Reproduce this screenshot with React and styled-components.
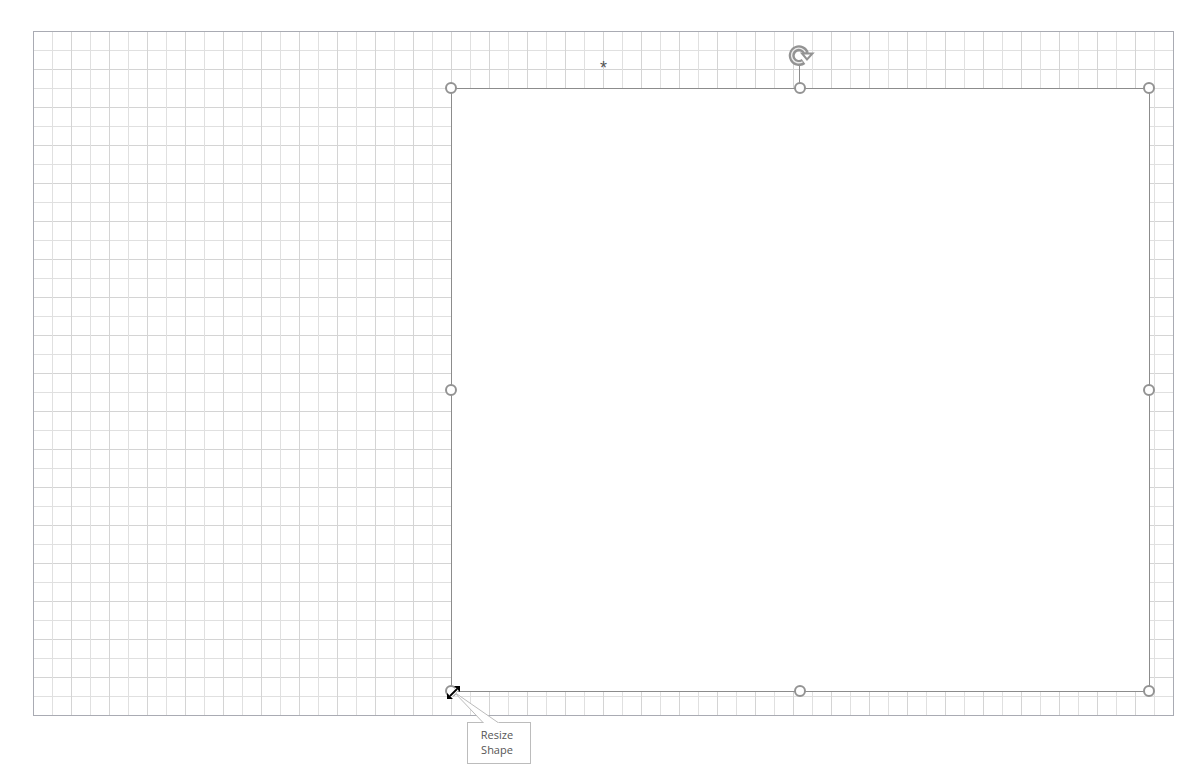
import React from "react";
import styled, { createGlobalStyle } from "styled-components";

const Global = createGlobalStyle`
  * { box-sizing: border-box; }
  body {
    margin: 0;
    background: #fff;
    color: #555;
    font-family: "Open Sans", "Noto Sans", sans-serif;
  }
`;

const Page = styled.main`
  display: flex;
  flex-direction: column;
  min-height: 100vh;
  padding: 31px 24px 51px 33px;
`;

const Canvas = styled.section`
  display: flex;
  flex: 1;
  position: relative;
  padding: 56px 23px 23px 417px;
  border: 1px solid #a9abb3;
  background-color: #fff;
  background-image:
    linear-gradient(to right, transparent 18px, #e0e0e0 18px, #e0e0e0 19px, transparent 19px, transparent 37px, #d4d4d4 37px),
    linear-gradient(to bottom, transparent 18px, #e0e0e0 18px, #e0e0e0 19px, transparent 19px, transparent 37px, #d4d4d4 37px);
  background-size: 38px 38px;
`;

const Note = styled.span`
  position: absolute;
  left: 566px;
  top: 26px;
  font-family: "Liberation Sans", Arial, sans-serif;
  font-size: 18px;
  line-height: 20px;
`;

const Shape = styled.div`
  flex: 1;
  position: relative;
  border: 1px solid #8c8c8c;
  background: #fff;
`;

const Frame = styled.div`
  position: absolute;
  inset: -1px 0 0 -1px;
`;

const Handle = styled.button`
  position: absolute;
  left: ${(p) => p.$x};
  top: ${(p) => p.$y};
  width: 12px;
  height: 12px;
  margin: -6px;
  padding: 0;
  border: 2px solid #939393;
  border-radius: 50%;
  background: #fff;
  cursor: ${(p) => p.$cursor};
`;

const Rotator = styled.div`
  position: absolute;
  left: 50%;
  bottom: 100%;
  display: flex;
  flex-direction: column;
  width: 28px;
  margin-left: -12px;
`;

const Rotate = styled.button`
  display: flex;
  height: 22px;
  padding: 0;
  border: 0;
  background: none;
  cursor: grab;
`;

const Stem = styled.span`
  width: 1px;
  height: 22px;
  margin-left: 11px;
  background: #8c8c8c;
`;

const Tail = styled.svg`
  position: absolute;
  left: 2px;
  top: 100%;
`;

const Cursor = styled.svg`
  position: absolute;
  left: -5px;
  bottom: -9px;
`;

const Callout = styled.div`
  position: absolute;
  left: 16px;
  top: calc(100% + 31px);
  width: 64px;
  padding: 4px 12px 6px 8px;
  border: 1px solid #bcbcbc;
  background: #fff;
  font-size: 11px;
  line-height: 15px;
  text-align: center;
`;

const handles = [
  ["0%", "0%", "nwse-resize", "top left"],
  ["50%", "0%", "ns-resize", "top"],
  ["100%", "0%", "nesw-resize", "top right"],
  ["0%", "50%", "ew-resize", "left"],
  ["100%", "50%", "ew-resize", "right"],
  ["0%", "100%", "nesw-resize", "bottom left"],
  ["50%", "100%", "ns-resize", "bottom"],
  ["100%", "100%", "nwse-resize", "bottom right"],
];

export default function App() {
  return (
    <>
      <Global />
      <Page>
        <Canvas>
          <Note>*</Note>
          <Shape>
            <Frame>
              <Rotator>
                <Rotate aria-label="Rotate shape">
                  <svg width="28" height="22" viewBox="0 0 28 22">
                    <path d="M15.500 17.500A7.300 7.300 0 1 1 18 9.500" fill="none" stroke="#939393" strokeWidth="6" />
                    <path d="M14.500 17.800A7.300 7.300 0 1 1 17.500 8.500" fill="none" stroke="#ececec" strokeWidth="1.400" />
                    <path d="M14 9.500H24.500L19 15.500Z" fill="#fff" stroke="#939393" strokeWidth="2" />
                  </svg>
                </Rotate>
                <Stem />
              </Rotator>
              {handles.map(([x, y, cursor, name]) => (
                <Handle key={name} $x={x} $y={y} $cursor={cursor} aria-label={`Resize ${name}`} />
              ))}
              <Callout>Resize Shape</Callout>
              <Tail width="48" height="33" viewBox="0 0 48 33">
                <path d="M1 1L31 32H46Z" fill="#fff" />
                <path d="M30 31.500L1 1L45 31.500" fill="none" stroke="#bcbcbc" />
              </Tail>
              <Cursor width="16" height="16" viewBox="0 0 16 16">
                <path d="M4 12L11 5" stroke="#fff" strokeWidth="4" />
                <path d="M4 12L11 5" stroke="#000" strokeWidth="1.800" />
                <path d="M8 2H14V8ZM1 9V15H7Z" fill="#000" />
              </Cursor>
            </Frame>
          </Shape>
        </Canvas>
      </Page>
    </>
  );
}
